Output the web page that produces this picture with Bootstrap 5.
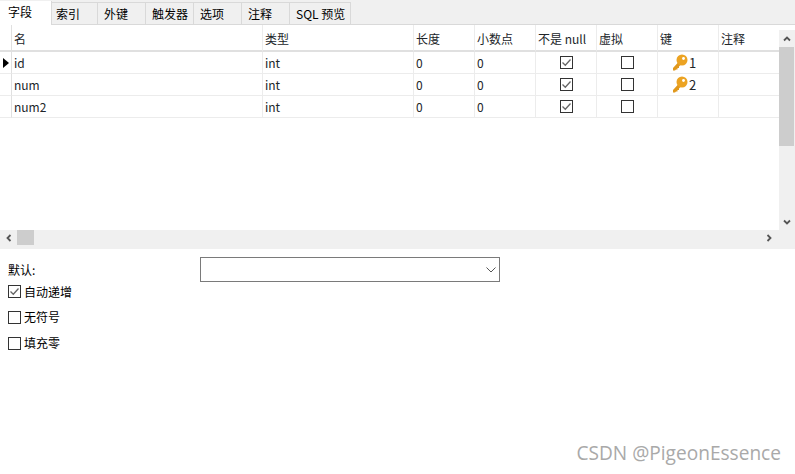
<!DOCTYPE html>
<html lang="zh">
<head>
<meta charset="utf-8">
<title>字段</title>
<link rel="stylesheet" href="https://cdn.jsdelivr.net/npm/bootstrap@5.3.0/dist/css/bootstrap.min.css">
<style>
html,body{height:474px;overflow:hidden;background:#fff}
body{font-family:"Noto Sans CJK SC","Noto Sans",sans-serif;font-size:12px;line-height:16px;color:#000}
.tabstrip{height:25px;background:#f0f0f0;border-bottom:1px solid #d9d9d9}
.tabitem{width:48px;height:22px;margin-top:2px;border-right:1px solid #d9d9d9;border-top:1px solid #d9d9d9;padding-left:6px;line-height:22px;white-space:nowrap}
.tabitem.narrow{width:46px;padding-left:4px}
.tabitem.wide{width:61px;padding-left:6px}
.tabitem.current{width:52px;height:24px;margin-top:1px;background:#fff;border:0;border-right:1px solid #d9d9d9;padding-left:8px;line-height:21px;position:relative;z-index:1}
.gridzone{height:205px}
.fieldgrid{table-layout:fixed;width:779px;border-collapse:separate;border-spacing:0;margin:0}
.fieldgrid th,.fieldgrid td{padding:0 0 0 2px;font-weight:400;border-right:1px solid #ececec;border-bottom:1px solid #ececec;height:22px;line-height:20px;vertical-align:middle;white-space:nowrap;box-shadow:none;background:transparent}
.fieldgrid th{height:27px;border-bottom:2px solid #e0e0e0;padding-top:3px;line-height:22px}
.fieldgrid .lead-cell{padding:0;border-right-color:#e0e0e0}
.fieldgrid .last-cell{border-right:0}
.fieldgrid td.mid{padding-left:0;text-align:center}
.rowmark{display:block;width:0;height:0;margin-left:3px;border-left:6px solid #000;border-top:5.5px solid transparent;border-bottom:5.5px solid transparent}
.tick{display:block;width:13px;height:13px;flex:none}
.cellbox{margin:auto}
.keycell{padding-left:14px!important}
.keyico{width:16px;height:17px;margin-right:1px}
.keynum{font-size:13px}
.vbar{width:16px;background:#f0f0f0;margin-top:5px;height:200px}
.vbtn{height:17px;color:#555}
.vthumb{width:15px;height:99px;background:#cdcdcd}
.hbar{height:19px;background:#f0f0f0}
.hbtn{width:17px;height:15px;color:#555}
.hthumb{width:17px;height:15px;background:#cdcdcd}
.hright{margin-right:18px}
.arrow{width:8px;height:8px}
.formzone{padding:8px 8px 0}
.deflabel{width:192px}
.selectbox{width:300px;height:25px;border:1px solid #7a7a7a;padding-right:3px}
.optionrow{height:26px;gap:3px}
.firstopt{height:23px;margin-top:-2px;margin-bottom:1px}
.stamp{position:absolute;right:14px;bottom:9px;font-family:"Open Sans","Noto Sans",sans-serif;font-size:19.100px;line-height:24px;color:#a9a9a9}
</style>
</head>
<body class="position-relative">
<nav class="tabstrip d-flex">
  <div class="tabitem current">字段</div>
  <div class="tabitem narrow">索引</div>
  <div class="tabitem">外键</div>
  <div class="tabitem">触发器</div>
  <div class="tabitem">选项</div>
  <div class="tabitem">注释</div>
  <div class="tabitem wide">SQL 预览</div>
</nav>

<div class="gridzone d-flex">
  <div class="flex-grow-1">
    <table class="table table-borderless fieldgrid">
      <colgroup>
        <col style="width:12px"><col style="width:251px"><col style="width:151px"><col style="width:61px"><col style="width:61px"><col style="width:61px"><col style="width:61px"><col style="width:61px"><col style="width:60px">
      </colgroup>
      <thead>
        <tr><th class="lead-cell"></th><th>名</th><th>类型</th><th>长度</th><th>小数点</th><th>不是 null</th><th>虚拟</th><th>键</th><th class="last-cell">注释</th></tr>
      </thead>
      <tbody>
        <tr>
          <td class="lead-cell"><span class="rowmark"></span></td><td>id</td><td>int</td><td>0</td><td>0</td>
          <td class="mid"><svg class="tick cellbox" viewBox="0 0 13 13"><rect x=".5" y=".5" width="12" height="12" fill="#fff" stroke="#333"/><path d="M2.500 6.500l2.800 2.800 5.200-5.800" fill="none" stroke="#666" stroke-width="1.300"/></svg></td>
          <td class="mid"><svg class="tick cellbox" viewBox="0 0 13 13"><rect x=".5" y=".5" width="12" height="12" fill="#fff" stroke="#333"/></svg></td>
          <td class="keycell"><span class="d-flex align-items-center"><svg class="keyico" viewBox="0 0 16 17"><path d="M1 14l5.500-6 2.500 2.500-2 2v1.500H5.500v1.500H4L3 16.500H1z" fill="#e0981c"/><circle cx="10" cy="6" r="5.500" fill="#eca322"/><circle cx="11.500" cy="4.500" r="1.400" fill="#fff"/></svg><span class="keynum">1</span></span></td>
          <td class="last-cell"></td>
        </tr>
        <tr>
          <td class="lead-cell"></td><td>num</td><td>int</td><td>0</td><td>0</td>
          <td class="mid"><svg class="tick cellbox" viewBox="0 0 13 13"><rect x=".5" y=".5" width="12" height="12" fill="#fff" stroke="#333"/><path d="M2.500 6.500l2.800 2.800 5.200-5.800" fill="none" stroke="#666" stroke-width="1.300"/></svg></td>
          <td class="mid"><svg class="tick cellbox" viewBox="0 0 13 13"><rect x=".5" y=".5" width="12" height="12" fill="#fff" stroke="#333"/></svg></td>
          <td class="keycell"><span class="d-flex align-items-center"><svg class="keyico" viewBox="0 0 16 17"><path d="M1 14l5.500-6 2.500 2.500-2 2v1.500H5.500v1.500H4L3 16.500H1z" fill="#e0981c"/><circle cx="10" cy="6" r="5.500" fill="#eca322"/><circle cx="11.500" cy="4.500" r="1.400" fill="#fff"/></svg><span class="keynum">2</span></span></td>
          <td class="last-cell"></td>
        </tr>
        <tr>
          <td class="lead-cell"></td><td>num2</td><td>int</td><td>0</td><td>0</td>
          <td class="mid"><svg class="tick cellbox" viewBox="0 0 13 13"><rect x=".5" y=".5" width="12" height="12" fill="#fff" stroke="#333"/><path d="M2.500 6.500l2.800 2.800 5.200-5.800" fill="none" stroke="#666" stroke-width="1.300"/></svg></td>
          <td class="mid"><svg class="tick cellbox" viewBox="0 0 13 13"><rect x=".5" y=".5" width="12" height="12" fill="#fff" stroke="#333"/></svg></td>
          <td></td>
          <td class="last-cell"></td>
        </tr>
      </tbody>
    </table>
  </div>
  <div class="vbar d-flex flex-column flex-shrink-0">
    <div class="vbtn d-flex align-items-center justify-content-center"><svg class="arrow" viewBox="0 0 8 8"><path d="M1 5.500L4 2.500l3 3" fill="none" stroke="currentColor" stroke-width="1.800"/></svg></div>
    <div class="vthumb"></div>
    <div class="flex-grow-1"></div>
    <div class="vbtn d-flex align-items-center justify-content-center"><svg class="arrow" viewBox="0 0 8 8"><path d="M1 2.500L4 5.500l3-3" fill="none" stroke="currentColor" stroke-width="1.800"/></svg></div>
  </div>
</div>

<div class="hbar d-flex align-items-start">
  <div class="hbtn d-flex align-items-center justify-content-center"><svg class="arrow" viewBox="0 0 8 8"><path d="M5.500 1L2.500 4l3 3" fill="none" stroke="currentColor" stroke-width="1.800"/></svg></div>
  <div class="hthumb"></div>
  <div class="flex-grow-1"></div>
  <div class="hbtn hright d-flex align-items-center justify-content-center"><svg class="arrow" viewBox="0 0 8 8"><path d="M2.500 1l3 3-3 3" fill="none" stroke="currentColor" stroke-width="1.800"/></svg></div>
</div>

<section class="formzone">
  <div class="d-flex align-items-center">
    <div class="deflabel">默认:</div>
    <div class="selectbox d-flex align-items-center justify-content-end"><svg width="10" height="6" viewBox="0 0 10 6"><path d="M.5.500L5 5 9.500.500" fill="none" stroke="#555" stroke-width="1"/></svg></div>
  </div>
  <div class="optionrow firstopt d-flex align-items-center">
    <svg class="tick" viewBox="0 0 13 13"><rect x=".5" y=".5" width="12" height="12" fill="#fff" stroke="#333"/><path d="M2.500 6.500l2.800 2.800 5.200-5.800" fill="none" stroke="#666" stroke-width="1.300"/></svg><span>自动递增</span>
  </div>
  <div class="optionrow d-flex align-items-center">
    <svg class="tick" viewBox="0 0 13 13"><rect x=".5" y=".5" width="12" height="12" fill="#fff" stroke="#333"/></svg><span>无符号</span>
  </div>
  <div class="optionrow d-flex align-items-center">
    <svg class="tick" viewBox="0 0 13 13"><rect x=".5" y=".5" width="12" height="12" fill="#fff" stroke="#333"/></svg><span>填充零</span>
  </div>
</section>
<div class="stamp">CSDN @PigeonEssence</div>
<script src="https://cdn.jsdelivr.net/npm/bootstrap@5.3.0/dist/js/bootstrap.bundle.min.js"></script>
</body>
</html>
